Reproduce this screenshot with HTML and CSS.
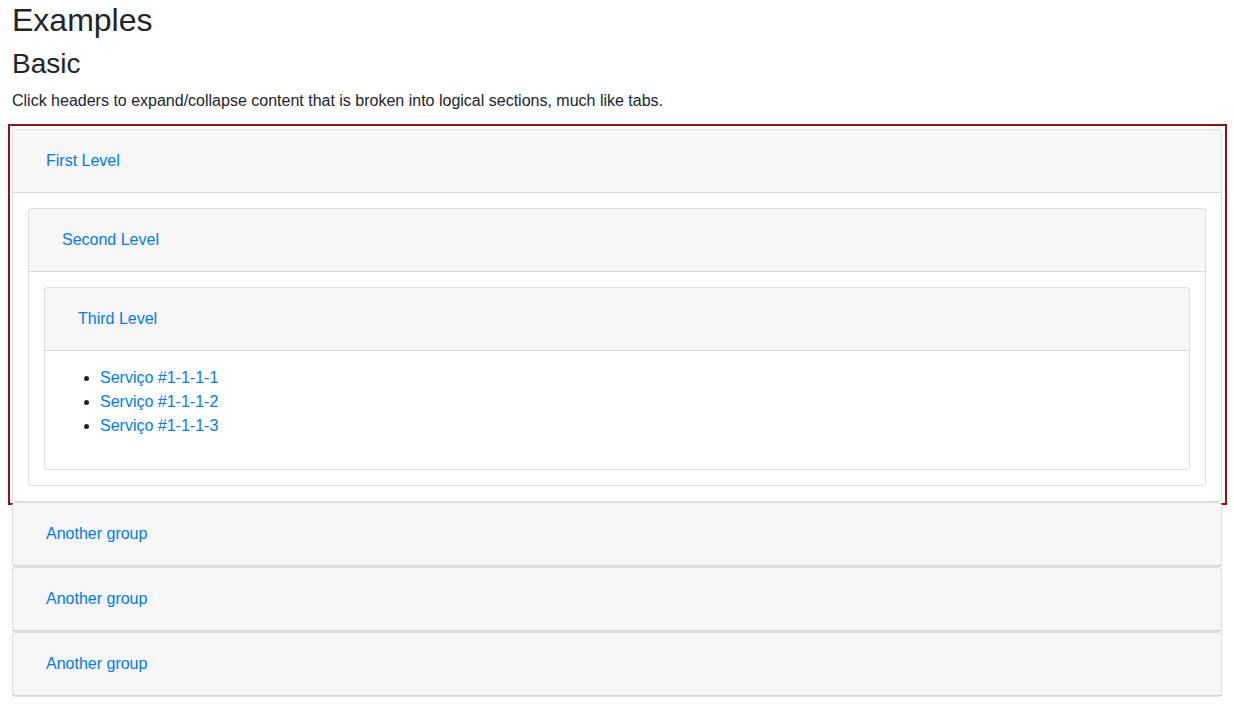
FILE: index.html
```html
<!DOCTYPE html>
<html lang="en">
<head>
<meta charset="utf-8">
<title>Examples</title>
<link rel="stylesheet" href="styles.css">
</head>
<body>
<div class="container">
  <h2 class="title">Examples</h2>
  <h3 class="subtitle">Basic</h3>
  <p class="lead-text">Click headers to expand/collapse content that is broken into logical sections, much like tabs.</p>

  <div class="accordion">
    <div class="card card-focus">
      <div class="card-header"><h5 class="hdr"><a class="btn-link" href="#">First Level</a></h5></div>
      <div class="card-body">
        <div class="card">
          <div class="card-header"><h5 class="hdr"><a class="btn-link" href="#">Second Level</a></h5></div>
          <div class="card-body">
            <div class="card">
              <div class="card-header"><h5 class="hdr"><a class="btn-link" href="#">Third Level</a></h5></div>
              <div class="card-body">
                <ul class="services">
                  <li><a href="#">Serviço #1-1-1-1</a></li>
                  <li><a href="#">Serviço #1-1-1-2</a></li>
                  <li><a href="#">Serviço #1-1-1-3</a></li>
                </ul>
              </div>
            </div>
          </div>
        </div>
      </div>
    </div>
    <div class="card">
      <div class="card-header"><h5 class="hdr"><a class="btn-link" href="#">Another group</a></h5></div>
    </div>
    <div class="card">
      <div class="card-header"><h5 class="hdr"><a class="btn-link" href="#">Another group</a></h5></div>
    </div>
    <div class="card">
      <div class="card-header"><h5 class="hdr"><a class="btn-link" href="#">Another group</a></h5></div>
    </div>
  </div>
</div>
</body>
</html>
```

FILE: styles.css
```css
* { box-sizing: border-box; }
html, body {
  margin: 0;
  padding: 0;
  background: #fff;
}
body {
  font-family: "Liberation Sans", Arial, Helvetica, sans-serif;
  font-size: 16px;
  line-height: 1.5;
  color: #212529;
}
a { color: #007bff; text-decoration: none; }
.container {
  padding: 1px 12px 0 12px;
}
.title {
  font-size: 32px;
  font-weight: 500;
  line-height: 1.2;
  margin: 0 0 8px 0;
}
.subtitle {
  font-size: 28px;
  font-weight: 500;
  line-height: 1.2;
  margin: 0 0 8px 0;
}
.lead-text {
  margin: 0 0 16px 0;
}
.accordion {
  display: flex;
  flex-direction: column;
}
.card {
  position: relative;
  display: flex;
  flex-direction: column;
  background: #fff;
  border: 1px solid rgba(0,0,0,.125);
  border-radius: 4px;
}
.card-focus::after {
  content: "";
  position: absolute;
  top: -6px;
  left: -5px;
  right: -6px;
  bottom: -4px;
  border: 2px solid #8e1414;
  pointer-events: none;
}
.card-header {
  padding: 12px 20px;
  background: rgba(0,0,0,.03);
  border-bottom: 1px solid rgba(0,0,0,.125);
}
.card-header:first-child {
  border-radius: 3px 3px 0 0;
}
.hdr {
  margin: 0;
  font-size: 20px;
  font-weight: 500;
  line-height: 1.2;
}
.btn-link {
  display: inline-block;
  padding: 6px 12px;
  border: 1px solid transparent;
  font-size: 16px;
  line-height: 24px;
  font-weight: 400;
  color: #007bff;
}
.card-body {
  padding: 15px;
}
.services {
  margin: 0 0 16px 0;
  padding-left: 40px;
}
```
